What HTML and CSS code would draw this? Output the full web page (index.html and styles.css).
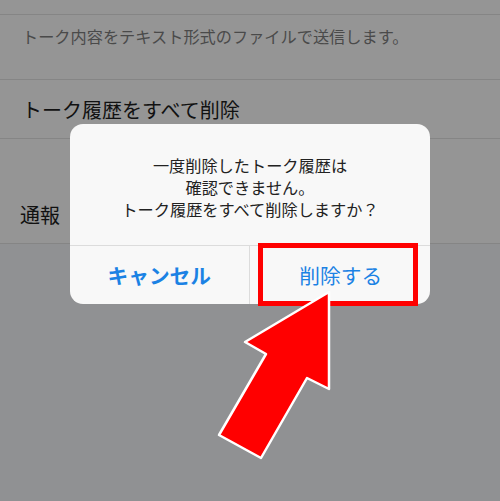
FILE: index.html
```html
<!DOCTYPE html>
<html lang="ja">
<head>
<meta charset="utf-8">
<link rel="stylesheet" href="styles.css">
</head>
<body>
<div class="screen">
  <div class="band"></div>
  <div class="row row-desc">トーク内容をテキスト形式のファイルで送信します。</div>
  <div class="row row-delete">トーク履歴をすべて削除</div>
  <div class="row row-report">通報</div>

  <div class="dialog">
    <div class="message">一度削除したトーク履歴は<br>確認できません。<br>トーク履歴をすべて削除しますか？</div>
    <div class="buttons">
      <div class="btn btn-cancel">キャンセル</div>
      <div class="btn btn-delete">削除する</div>
    </div>
  </div>

  <div class="highlight"></div>

  <svg class="arrow" width="500" height="501" viewBox="0 0 500 501">
    <polygon points="329,292 329,389 307,378 261,458 219,435 266,354 245,342" fill="#ff0000" stroke="#ffffff" stroke-width="2.5" stroke-linejoin="round"/>
  </svg>
</div>
</body>
</html>
```
FILE: styles.css
```css
html, body {
  margin: 0;
  padding: 0;
}
body {
  background: #909193;
  font-family: "Noto Sans CJK JP", "Noto Sans", sans-serif;
}
.screen {
  position: relative;
  width: 500px;
  height: 501px;
  overflow: hidden;
  background: #909193;
}
.band {
  height: 14px;
  background: #959595;
  border-bottom: 1px solid #858585;
}
.row {
  background: #959595;
  border-bottom: 1px solid #858585;
  padding-left: 22px;
  box-sizing: border-box;
}
.row-desc {
  height: 65px;
  padding-top: 10px;
  font-size: 16.2px;
  line-height: 22px;
  color: #4a4a4a;
}
.row-delete {
  height: 59px;
  display: flex;
  align-items: center;
  font-size: 20px;
  color: #111;
}
.row-report {
  height: 105px;
  padding-left: 20px;
  padding-top: 61px;
  font-size: 20px;
  line-height: 30px;
  color: #111;
}
.dialog {
  position: absolute;
  left: 70px;
  top: 124px;
  width: 360px;
  height: 180px;
  background: #f8f8f8;
  border-radius: 13px;
  display: flex;
  flex-direction: column;
  overflow: hidden;
}
.message {
  height: 122px;
  box-sizing: border-box;
  padding-top: 30px;
  text-align: center;
  font-size: 16.2px;
  line-height: 22px;
  color: #222;
  border-bottom: 1px solid #dcdcdc;
}
.buttons {
  flex: 1;
  display: flex;
}
.btn {
  flex: 1;
  display: flex;
  align-items: center;
  justify-content: center;
  font-size: 20.7px;
  color: #1b82e4;
}
.btn-cancel {
  font-weight: bold;
  border-right: 1px solid #dcdcdc;
}
.btn-delete {
  padding-left: 2px;
}
.highlight {
  position: absolute;
  left: 258px;
  top: 243px;
  width: 160px;
  height: 63px;
  box-sizing: border-box;
  border: 5px solid #ff0000;
}
.arrow {
  position: absolute;
  left: 0;
  top: 0;
}
```
